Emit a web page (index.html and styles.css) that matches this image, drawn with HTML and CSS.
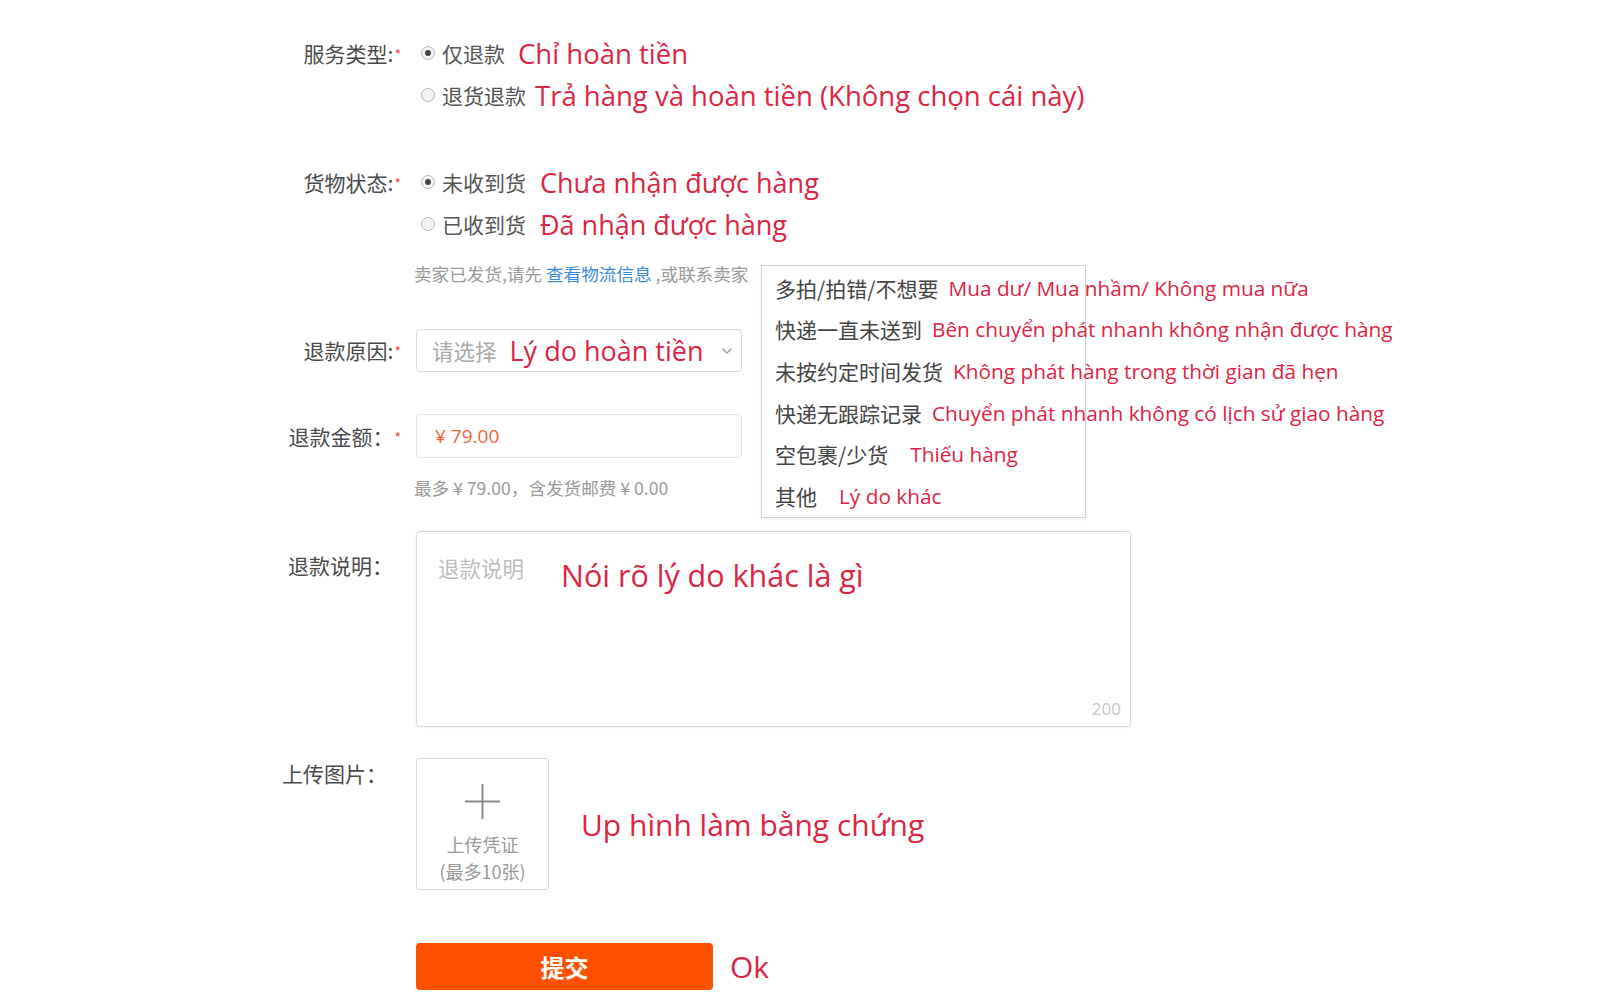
FILE: index.html
```html
<!DOCTYPE html>
<html lang="zh">
<head>
<meta charset="utf-8">
<title>退款申请</title>
<link rel="stylesheet" href="styles.css">
</head>
<body>
<div class="form">
  <div class="row">
    <div class="label">服务类型:<span class="req">*</span></div>
    <div class="field">
      <div class="opt"><span class="radio on"></span><span class="cn">仅退款</span><span class="vi">Chỉ hoàn tiền</span></div>
      <div class="opt"><span class="radio"></span><span class="cn">退货退款</span><span class="vi tight">Trả hàng và hoàn tiền (Không chọn cái này)</span></div>
    </div>
  </div>

  <div class="row row-goods">
    <div class="label">货物状态:<span class="req">*</span></div>
    <div class="field">
      <div class="opt"><span class="radio on"></span><span class="cn">未收到货</span><span class="vi wide">Chưa nhận được hàng</span></div>
      <div class="opt"><span class="radio"></span><span class="cn">已收到货</span><span class="vi wide">Đã nhận được hàng</span></div>
    </div>
  </div>

  <div class="row row-hint">
    <div class="label"></div>
    <div class="field hint">卖家已发货,请先 <span class="link">查看物流信息</span> ,或联系卖家</div>
  </div>

  <div class="row row-reason">
    <div class="label">退款原因:<span class="req">*</span></div>
    <div class="field">
      <div class="select">
        <span class="ph">请选择</span><span class="vi sel-vi">Lý do hoàn tiền</span>
        <svg class="chev" width="12" height="8" viewBox="0 0 12 8"><path d="M1.5 1.5 L6 6 L10.5 1.5" fill="none" stroke="#9a9a9a" stroke-width="1.3"/></svg>
        <div class="menu">
          <div class="mi"><span class="cn">多拍/拍错/不想要</span><span class="vi">Mua dư/ Mua nhầm/ Không mua nữa</span></div>
          <div class="mi"><span class="cn">快递一直未送到</span><span class="vi">Bên chuyển phát nhanh không nhận được hàng</span></div>
          <div class="mi"><span class="cn">未按约定时间发货</span><span class="vi">Không phát hàng trong thời gian đã hẹn</span></div>
          <div class="mi"><span class="cn">快递无跟踪记录</span><span class="vi">Chuyển phát nhanh không có lịch sử giao hàng</span></div>
          <div class="mi"><span class="cn">空包裹/少货</span><span class="vi far">Thiếu hàng</span></div>
          <div class="mi"><span class="cn">其他</span><span class="vi far">Lý do khác</span></div>
        </div>
      </div>
    </div>
  </div>

  <div class="row row-amount">
    <div class="label">退款金额：<span class="req">*</span></div>
    <div class="field">
      <div class="input"><span class="money">¥ 79.00</span></div>
    </div>
  </div>

  <div class="row row-hint2">
    <div class="label"></div>
    <div class="field hint">最多 ¥ 79.00，含发货邮费 ¥ 0.00</div>
  </div>

  <div class="row row-desc">
    <div class="label label-top">退款说明：</div>
    <div class="field">
      <div class="textarea">
        <div class="ta-line"><span class="ph ta-ph">退款说明</span><span class="vi big">Nói rõ lý do khác là gì</span></div>
        <div class="count">200</div>
      </div>
    </div>
  </div>

  <div class="row row-upload">
    <div class="label label-up">上传图片：</div>
    <div class="field upfield">
      <div class="upload">
        <svg class="plus" width="37" height="37" viewBox="0 0 37 37"><path d="M18.5 1 V36 M1 18.5 H36" stroke="#8a8a8a" stroke-width="2" fill="none"/></svg>
        <div class="up-t">上传凭证</div>
        <div class="up-t">(最多10张)</div>
      </div>
      <span class="vi big up-vi">Up hình làm bằng chứng</span>
    </div>
  </div>

  <div class="row row-submit">
    <div class="label"></div>
    <div class="field subfield">
      <div class="submit">提交</div>
      <span class="vi big ok">Ok</span>
    </div>
  </div>
</div>
</body>
</html>
```
FILE: styles.css
```css
body {
  margin: 0;
  background: #fff;
  font-family: "Noto Sans CJK SC", sans-serif;
  color: #555;
}
.form {
  padding-top: 32px;
}
.row {
  display: flex;
}
.label {
  width: 401px;
  flex: none;
  box-sizing: border-box;
  text-align: right;
  font-size: 21px;
  line-height: 42px;
  color: #4a4a4a;
  white-space: nowrap;
}
.req {
  color: #f04a4a;
  font-size: 14px;
  margin-left: 1px;
  vertical-align: 2px;
}
.field {
  margin-left: 15px;
}
.opt {
  display: flex;
  align-items: center;
  height: 42px;
  white-space: nowrap;
}
.radio {
  width: 14px;
  height: 14px;
  box-sizing: border-box;
  border: 1px solid #b8b8b8;
  border-radius: 50%;
  background: #f3f3f3;
  margin-left: 5px;
  margin-right: 7px;
  position: relative;
  flex: none;
}
.radio.on::after {
  content: "";
  position: absolute;
  left: 3px;
  top: 3px;
  width: 6px;
  height: 6px;
  border-radius: 50%;
  background: #444;
}
.cn {
  font-size: 21px;
  color: #555;
}
.vi {
  font-family: "Open Sans", sans-serif;
  color: #dc2543;
  font-size: 27.5px;
  margin-left: 13px;
  white-space: nowrap;
}
.vi.tight { margin-left: 9px; }
.vi.wide { margin-left: 14px; font-size: 27px; }
.row-goods { margin-top: 45px; }
.row-hint { margin-top: 17px; }
.hint {
  font-size: 17.6px;
  line-height: 24px;
  color: #9a9a9a;
  margin-left: 13px;
  white-space: nowrap;
}
.link { color: #3d8bd8; }
.row-reason {
  margin-top: 43px;
  align-items: center;
}
.select {
  width: 326px;
  height: 43px;
  box-sizing: border-box;
  border: 1px solid #dcdcdc;
  border-radius: 4px;
  display: flex;
  align-items: center;
  padding: 0 8px 0 15px;
  position: relative;
}
.ph {
  color: #aaa;
  font-size: 21.5px;
}
.sel-vi { font-size: 27px; }
.chev {
  margin-left: auto;
}
.menu {
  position: absolute;
  left: 344px;
  top: -65px;
  width: 325px;
  box-sizing: border-box;
  border: 1px solid #d2d2d2;
  background: #fff;
  padding-top: 1px;
  box-shadow: 0 1px 3px rgba(0,0,0,0.08);
  z-index: 2;
}
.mi {
  height: 41.6px;
  display: flex;
  align-items: center;
  padding-left: 13px;
  white-space: nowrap;
}
.mi .cn {
  font-size: 21px;
  color: #444;
}
.mi .vi {
  font-size: 20.8px;
  margin-left: 10px;
}
.mi .vi.far { margin-left: 22px; }
.row-amount {
  margin-top: 42px;
  align-items: center;
}
.input {
  width: 326px;
  height: 44px;
  box-sizing: border-box;
  border: 1px solid #e2e2e2;
  border-radius: 4px;
  display: flex;
  align-items: center;
  padding-left: 18px;
}
.money {
  font-family: "Open Sans", sans-serif;
  color: #f0643c;
  font-size: 19px;
}
.row-hint2 { margin-top: 18px; }
.row-desc { margin-top: 31px; }
.label-top {
  padding-top: 14px;
  line-height: 41px;
  padding-right: 8px;
}
.textarea {
  width: 715px;
  height: 196px;
  box-sizing: border-box;
  border: 1px solid #d8d8d8;
  border-radius: 4px;
  box-shadow: 0 0 3px rgba(0,0,0,0.08);
  padding: 22px 9px 6px 21px;
  display: flex;
  flex-direction: column;
}
.ta-line {
  display: flex;
  align-items: flex-start;
  white-space: nowrap;
}
.ta-ph {
  line-height: 28px;
  color: #bcbcbc;
}
.ta-line .vi {
  margin-left: 37px;
  line-height: 42px;
}
.big { font-size: 30.5px; }
.count {
  margin-top: auto;
  align-self: flex-end;
  font-family: "Open Sans", sans-serif;
  color: #c8c8c8;
  font-size: 17px;
  line-height: 22px;
}
.row-upload { margin-top: 31px; }
.label-up {
  line-height: 30px;
  padding-right: 14px;
}
.upfield {
  display: flex;
  align-items: center;
}
.upload {
  width: 133px;
  height: 132px;
  box-sizing: border-box;
  border: 1px solid #d8d8d8;
  border-radius: 3px;
  display: flex;
  flex-direction: column;
  align-items: center;
  padding-top: 24px;
}
.plus { margin-bottom: 11px; }
.up-t {
  font-size: 18px;
  line-height: 26.5px;
  color: #999;
}
.up-vi { margin-left: 32px; font-size: 30px; }
.row-submit { margin-top: 53px; }
.subfield {
  display: flex;
  align-items: center;
}
.submit {
  width: 297px;
  height: 47px;
  background: #ff5000;
  border-radius: 4px;
  color: #fff;
  font-size: 24px;
  font-weight: bold;
  display: flex;
  align-items: center;
  justify-content: center;
}
.ok { margin-left: 17px; font-size: 30px; }
```
